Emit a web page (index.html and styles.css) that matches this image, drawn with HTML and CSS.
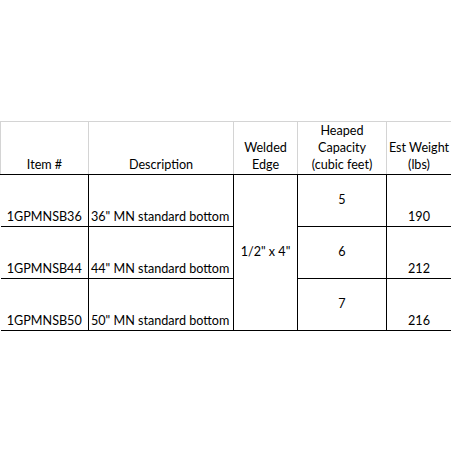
FILE: index.html
```html
<!DOCTYPE html>
<html>
<head>
<meta charset="utf-8">
<link rel="stylesheet" href="styles.css">
</head>
<body>
<table class="sheet">
  <colgroup>
    <col class="c-item">
    <col class="c-desc">
    <col class="c-edge">
    <col class="c-cap">
    <col class="c-wt">
  </colgroup>
  <thead>
    <tr>
      <th>Item #</th>
      <th>Description</th>
      <th>Welded<br>Edge</th>
      <th>Heaped<br>Capacity<br>(cubic feet)</th>
      <th>Est Weight<br>(lbs)</th>
    </tr>
  </thead>
  <tbody>
    <tr>
      <td class="item">1GPMNSB36</td>
      <td class="desc">36" MN standard bottom</td>
      <td class="edge" rowspan="3">1/2" x 4"</td>
      <td class="cap">5</td>
      <td class="wt">190</td>
    </tr>
    <tr>
      <td class="item">1GPMNSB44</td>
      <td class="desc">44" MN standard bottom</td>
      <td class="cap">6</td>
      <td class="wt">212</td>
    </tr>
    <tr>
      <td class="item">1GPMNSB50</td>
      <td class="desc">50" MN standard bottom</td>
      <td class="cap">7</td>
      <td class="wt">216</td>
    </tr>
  </tbody>
</table>
</body>
</html>
```

FILE: styles.css
```css
html, body {
  margin: 0;
  padding: 0;
  background: #ffffff;
}
body {
  width: 451px;
  height: 451px;
  display: flex;
  align-items: center;
  font-family: "Lato", "Liberation Sans", sans-serif;
  font-size: 12.6px;
  color: #000;
}
.sheet {
  border-collapse: collapse;
  table-layout: fixed;
  width: 451px;
}
.c-item { width: 88px; }
.c-desc { width: 145px; }
.c-edge { width: 64px; }
.c-cap { width: 89px; }
.c-wt { width: 65px; }

.sheet tr {
  height: 52px;
}
.sheet th {
  font-weight: normal;
  padding: 0 0 1px;
  vertical-align: bottom;
  text-align: center;
  line-height: 17px;
  white-space: nowrap;
  border: 1px solid #d4d4d4;
  border-bottom: 1px solid #000;
}
.sheet td {
  padding: 0 2px 1px;
  border: 1px solid #000;
  line-height: 17px;
  white-space: nowrap;
}
.sheet td.item {
  border-left: none;
  text-align: center;
  vertical-align: bottom;
}
.sheet td.desc {
  text-align: left;
  vertical-align: bottom;
}
.sheet td.edge,
.sheet td.cap {
  text-align: center;
  vertical-align: middle;
}
.sheet td.wt {
  text-align: center;
  vertical-align: bottom;
}
```
